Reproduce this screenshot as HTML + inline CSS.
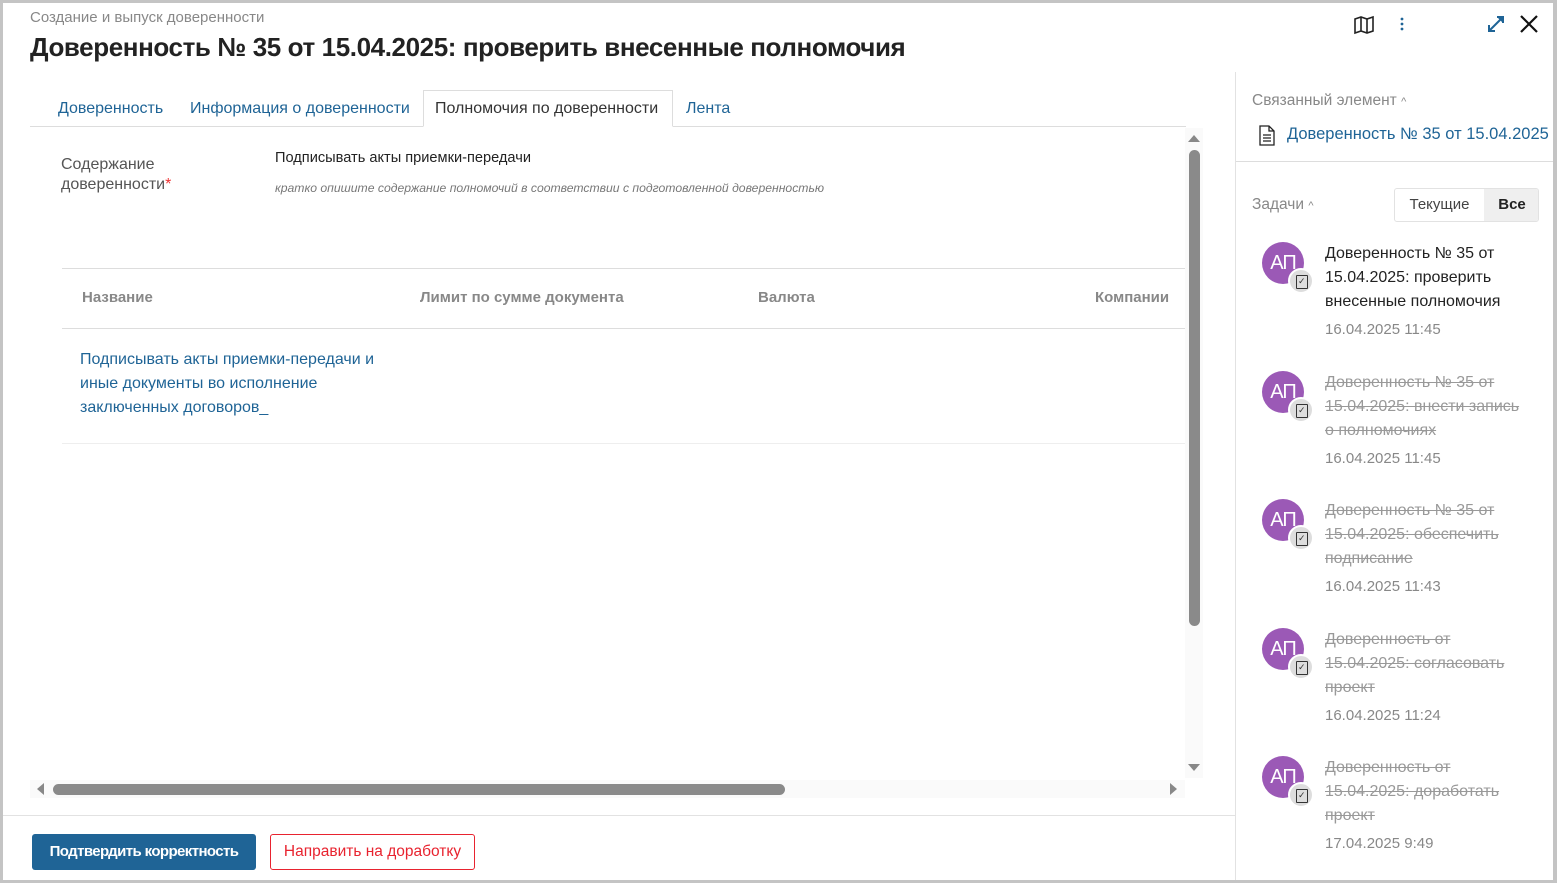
<!DOCTYPE html>
<html><head><meta charset="utf-8"><style>
*{box-sizing:border-box;margin:0;padding:0}
body{width:1557px;height:883px;background:#c4c4c4;font-family:"Liberation Sans",sans-serif;position:relative;overflow:hidden;color:#222}
.win{position:absolute;left:3px;top:3px;width:1550px;height:877px;background:#fff}
.a{position:absolute;white-space:nowrap}
.blue{color:#1f6496}
.task{position:absolute;left:1262px}
.av{position:absolute;left:0;top:0;width:42px;height:42px;border-radius:50%;background:#9b59b6;color:#fff;font-size:20px;line-height:42px;text-align:center;letter-spacing:-1px}
.bd{position:absolute;left:26px;top:26px;width:26px;height:26px;border-radius:50%;background:#ddd;border:2px solid #fff}
.tt{position:absolute;left:63px;top:0;font-size:16px;line-height:24px;width:200px;white-space:normal}
.tt.s{color:#999;text-decoration:line-through}
.td{position:absolute;left:63px;font-size:15px;color:#888;white-space:nowrap}
.bd::after{content:"";position:absolute;left:6px;top:5px;width:10px;height:12px;border:1.3px solid #333;border-radius:1px}
.bd::before{content:"✓";position:absolute;left:8px;top:6px;font-size:9px;color:#333}
</style></head><body>
<div class="win"></div>
<div class="a" style="left:30px;top:9px;font-size:15px;color:#888">Создание и выпуск доверенности</div>
<div class="a" style="left:30px;top:32px;font-size:26px;color:#222;font-weight:bold;letter-spacing:-0.4px">Доверенность № 35 от 15.04.2025: проверить внесенные полномочия</div>
<svg class="a" style="left:1353px;top:15px" width="22" height="20" viewBox="0 0 22 20" fill="none" stroke="#222" stroke-width="1.6"><path d="M2 4l6-2 6 2 6-2v14l-6 2-6-2-6 2z M8 2v14 M14 4v14"/></svg>
<svg class="a" style="left:1398px;top:15px" width="8" height="18"><circle cx="4" cy="4" r="1.4" fill="#1f6496"/><circle cx="4" cy="9" r="1.4" fill="#1f6496"/><circle cx="4" cy="14" r="1.4" fill="#1f6496"/></svg>
<svg class="a" style="left:1485px;top:14px" width="22" height="20" fill="none" stroke="#1f6496" stroke-width="2"><path d="M4 17L18 3"/><path d="M12 3h6v6" fill="#1f6496"/><path d="M4 11v6h6"/></svg>
<svg class="a" style="left:1519px;top:14px" width="20" height="20" stroke="#111" stroke-width="2.2"><path d="M2 2L18 18M18 2L2 18"/></svg>
<div class="a" style="left:30px;top:126px;width:1156px;height:1px;background:#ddd"></div>
<div class="a" style="left:423px;top:90px;width:250px;height:37px;border:1px solid #ddd;border-bottom:1px solid #fff;background:#fff"></div>
<div class="a blue" style="left:58px;top:100px;font-size:16px">Доверенность</div>
<div class="a blue" style="left:190px;top:100px;font-size:16px">Информация о доверенности</div>
<div class="a" style="left:435px;top:100px;font-size:16px;color:#333">Полномочия по доверенности</div>
<div class="a blue" style="left:686px;top:100px;font-size:16px">Лента</div>
<div class="a" style="left:61px;top:155px;font-size:16px;color:#555;line-height:20px">Содержание<br>доверенности<span style="color:#e33">*</span></div>
<div class="a" style="left:275px;top:150px;font-size:14.6px;color:#222">Подписывать акты приемки-передачи</div>
<div class="a" style="left:275px;top:181px;font-size:12.2px;color:#777;font-style:italic">кратко опишите содержание полномочий в соответствии с подготовленной доверенностью</div>
<div class="a" style="left:62px;top:268px;width:1123px;height:1px;background:#ddd"></div>
<div class="a" style="left:82px;top:289px;font-size:15px;color:#888;font-weight:bold">Название</div>
<div class="a" style="left:420px;top:289px;font-size:15px;color:#888;font-weight:bold">Лимит по сумме документа</div>
<div class="a" style="left:758px;top:289px;font-size:15px;color:#888;font-weight:bold">Валюта</div>
<div class="a" style="left:1095px;top:289px;font-size:15px;color:#888;font-weight:bold">Компании</div>
<div class="a" style="left:62px;top:328px;width:1123px;height:1px;background:#ddd"></div>
<div class="a blue" style="left:80px;top:348px;font-size:16px;line-height:24px">Подписывать акты приемки-передачи и<br>иные документы во исполнение<br>заключенных договоров_</div>
<div class="a" style="left:62px;top:443px;width:1123px;height:1px;background:#eee"></div>
<div class="a" style="left:1185px;top:128px;width:18px;height:650px;background:#fafafa"></div>
<svg class="a" style="left:1187px;top:133px" width="14" height="10"><path d="M1 9L7 2L13 9z" fill="#888"/></svg>
<div class="a" style="left:1189px;top:150px;width:11px;height:476px;border-radius:6px;background:#8a8a8a"></div>
<svg class="a" style="left:1187px;top:763px" width="14" height="10"><path d="M1 1L7 8L13 1z" fill="#888"/></svg>
<div class="a" style="left:30px;top:780px;width:1155px;height:18px;background:#fafafa"></div>
<svg class="a" style="left:35px;top:782px" width="10" height="14"><path d="M9 1L2 7L9 13z" fill="#888"/></svg>
<div class="a" style="left:53px;top:784px;width:732px;height:11px;border-radius:6px;background:#8a8a8a"></div>
<svg class="a" style="left:1169px;top:782px" width="10" height="14"><path d="M1 1L8 7L1 13z" fill="#888"/></svg>
<div class="a" style="left:3px;top:815px;width:1233px;height:1px;background:#e2e2e2"></div>
<div class="a" style="left:32px;top:834px;width:224px;height:36px;background:#1f6496;border-radius:3px;color:#fff;font-size:15px;font-weight:bold;letter-spacing:-0.6px;line-height:36px;text-align:center">Подтвердить корректность</div>
<div class="a" style="left:270px;top:834px;width:205px;height:36px;border:1px solid #e8232f;border-radius:3px;color:#e8232f;font-size:15.5px;line-height:34px;text-align:center">Направить на доработку</div>
<div class="a" style="left:1235px;top:72px;width:1px;height:808px;background:#e2e2e2"></div>
<div class="a" style="left:1252px;top:92px;font-size:15.5px;color:#888">Связанный элемент <span style="font-size:11px">^</span></div>
<svg class="a" style="left:1258px;top:125px" width="18" height="21" fill="none" stroke="#222" stroke-width="1.3"><path d="M2 1h9l5 5v14H2z M11 1v5h5 M5 10h8 M5 13h8 M5 16h8"/></svg>
<div class="a blue" style="left:1287px;top:125px;font-size:16.5px">Доверенность № 35 от 15.04.2025</div>
<div class="a" style="left:1236px;top:161px;width:317px;height:1px;background:#ddd"></div>
<div class="a" style="left:1252px;top:196px;font-size:15.5px;color:#888">Задачи <span style="font-size:11px">^</span></div>
<div class="a" style="left:1394px;top:188px;width:145px;height:34px;border:1px solid #e2e2e2;border-radius:3px;overflow:hidden">
<div class="a" style="left:0;top:0;width:89px;height:32px;font-size:15px;color:#444;line-height:32px;text-align:center">Текущие</div>
<div class="a" style="left:89px;top:0;width:56px;height:32px;background:#efefef;font-size:15px;font-weight:bold;line-height:32px;text-align:center">Все</div></div>
<div class="task" style="top:242px"><div class="av">АП</div><div class="bd"></div><div class="tt">Доверенность № 35 от 15.04.2025: проверить внесенные полномочия</div><div class="td" style="top:79px">16.04.2025 11:45</div></div>
<div class="task" style="top:371px"><div class="av">АП</div><div class="bd"></div><div class="tt s">Доверенность № 35 от 15.04.2025: внести запись о полномочиях</div><div class="td" style="top:79px">16.04.2025 11:45</div></div>
<div class="task" style="top:499px"><div class="av">АП</div><div class="bd"></div><div class="tt s">Доверенность № 35 от 15.04.2025: обеспечить подписание</div><div class="td" style="top:79px">16.04.2025 11:43</div></div>
<div class="task" style="top:628px"><div class="av">АП</div><div class="bd"></div><div class="tt s">Доверенность от<br>15.04.2025: согласовать проект</div><div class="td" style="top:79px">16.04.2025 11:24</div></div>
<div class="task" style="top:756px"><div class="av">АП</div><div class="bd"></div><div class="tt s">Доверенность от<br>15.04.2025: доработать проект</div><div class="td" style="top:79px">17.04.2025 9:49</div></div>
</body></html>
